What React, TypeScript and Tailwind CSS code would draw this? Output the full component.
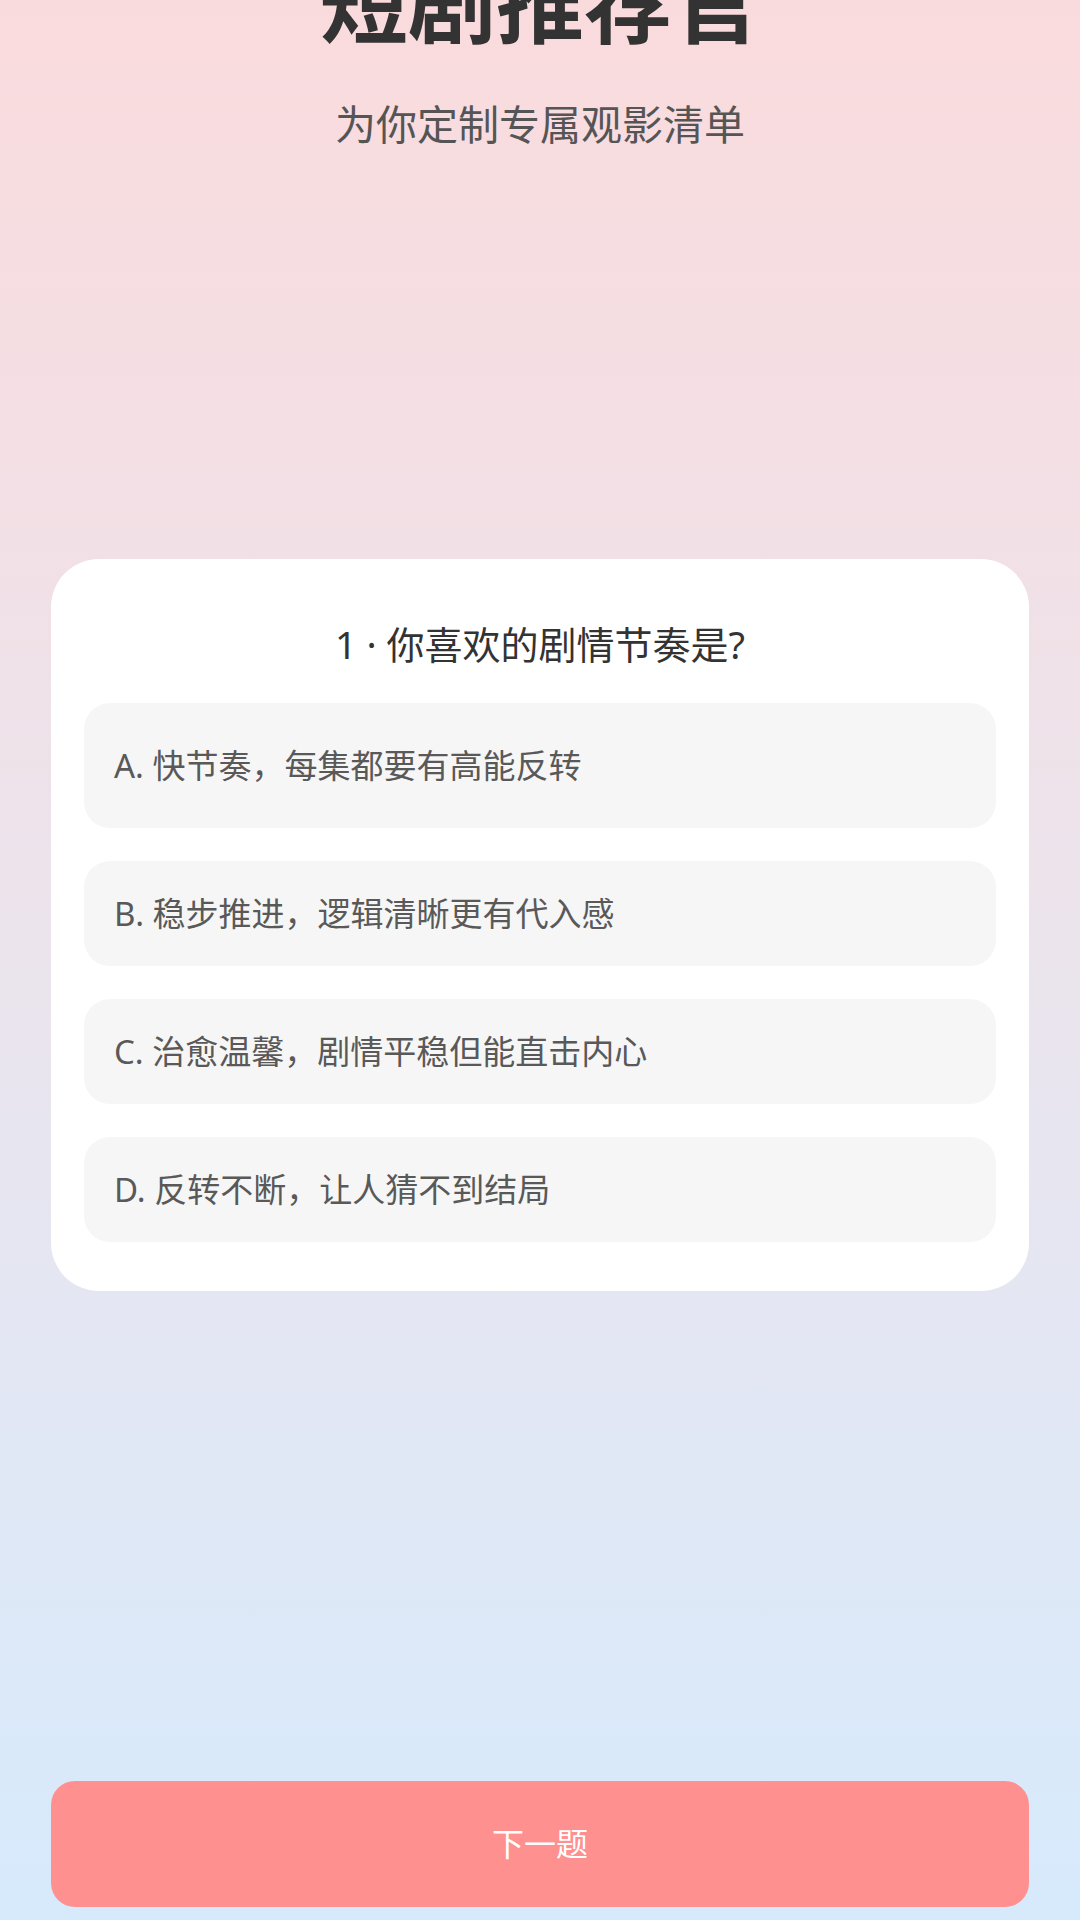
const options = [
  { key: "A", text: "快节奏，每集都要有高能反转", h: "h-[125px]" },
  { key: "B", text: "稳步推进，逻辑清晰更有代入感", h: "h-[105px]" },
  { key: "C", text: "治愈温馨，剧情平稳但能直击内心", h: "h-[105px]" },
  { key: "D", text: "反转不断，让人猜不到结局", h: "h-[105px]" },
];

export default function App() {
  return (
    <div
      className="flex h-[1920px] w-[1080px] flex-col overflow-hidden bg-gradient-to-b from-[#fadbdd] via-[#ebe4ed] to-[#d6eafc] px-[51px]"
      style={{ fontFamily: '"Noto Sans", "Noto Sans CJK SC", sans-serif' }}
    >
      <header className="flex flex-col items-center">
        <h1 className="mt-[-42px] text-[88px] leading-[88px] font-bold text-[#333333]">短剧推荐官</h1>
        <p className="mt-[58px] text-[41px] leading-[40px] text-[#555555]">为你定制专属观影清单</p>
      </header>

      <section className="mt-[415px] rounded-[48px] bg-white px-[33px] pt-[60px] pb-[49px]">
        <h2 className="text-center text-[38px] leading-[50px] text-[#333333]">1 · 你喜欢的剧情节奏是?</h2>
        <ul className="mt-[34px] flex flex-col gap-[33px]">
          {options.map((o) => (
            <li
              key={o.key}
              className={`flex items-center rounded-[26px] bg-[#f6f6f6] pl-[30px] text-[33px] text-[#595959] ${o.h}`}
            >
              {o.key}. {o.text}
            </li>
          ))}
        </ul>
      </section>

      <button className="mt-auto mb-[13px] flex h-[126px] w-full items-center justify-center rounded-[24px] bg-[#ff9090] text-[32px] text-white">
        下一题
      </button>
    </div>
  );
}
